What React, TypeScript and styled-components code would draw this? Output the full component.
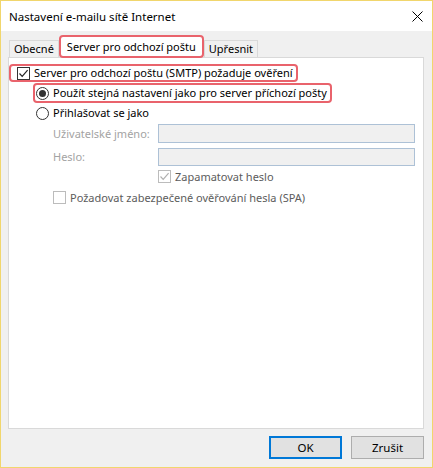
import React from 'react';
import styled, { createGlobalStyle } from 'styled-components';

const GlobalStyle = createGlobalStyle`
  html, body {
    margin: 0;
    padding: 0;
    background: #ffffff;
  }
  body {
    font-family: "Noto Sans", "Open Sans", sans-serif;
    font-size: 11px;
    color: #000;
  }
`;

const Window = styled.div`
  width: 433px;
  height: 468px;
  box-sizing: border-box;
  border: 1px solid #f1d66c;
  background: #f0f0f0;
  display: flex;
  flex-direction: column;
`;

const TitleBar = styled.div`
  height: 30px;
  background: #ffffff;
  display: flex;
  align-items: center;
  justify-content: space-between;
  padding: 0 0 0 8px;
  flex-shrink: 0;
`;

const Title = styled.span`
  font-size: 11.5px;
  line-height: 16px;
  margin-top: 1px;
`;

const CloseButton = styled.div`
  width: 30px;
  height: 30px;
  display: flex;
  align-items: center;
  justify-content: center;
`;

const Body = styled.div`
  flex: 1;
  display: flex;
  flex-direction: column;
  padding: 5px 8px 0 7px;
  min-height: 0;
`;

const TabRow = styled.div`
  display: flex;
  align-items: flex-end;
  height: 21px;
  padding-left: 1px;
  position: relative;
  z-index: 1;
`;

const Tab = styled.div<{ $active?: boolean }>`
  box-sizing: border-box;
  height: ${({ $active }) => ($active ? '23px' : '17px')};
  margin-bottom: ${({ $active }) => ($active ? '-1px' : '0')};
  padding: 0 ${({ $active }) => ($active ? '6px' : '4px')};
  display: flex;
  align-items: center;
  background: ${({ $active }) => ($active ? '#ffffff' : '#f0f0f0')};
  border: ${({ $active }) => ($active ? '2px solid #e9636c' : '1px solid #d9d9d9')};
  border-bottom: ${({ $active }) => ($active ? '2px solid #e9636c' : 'none')};
  border-radius: ${({ $active }) => ($active ? '4px' : '0')};
  line-height: 16px;
  white-space: nowrap;
`;

const Panel = styled.div`
  flex: 1;
  background: #ffffff;
  border: 1px solid #d9d9d9;
  padding: 6px 0 0 0;
  display: flex;
  flex-direction: column;
  align-items: flex-start;
`;

const Highlight = styled.div<{ $indent: number; $top: number; $h: number; $pl: number }>`
  box-sizing: border-box;
  margin-left: ${({ $indent }) => $indent}px;
  margin-top: ${({ $top }) => $top}px;
  height: ${({ $h }) => $h}px;
  border: 2px solid #e9636c;
  border-radius: 4px;
  padding: 0 3px 0 ${({ $pl }) => $pl}px;
  display: flex;
  align-items: center;
  gap: 4px;
`;

const Row = styled.div<{ $indent: number; $top: number; $h: number }>`
  margin-left: ${({ $indent }) => $indent}px;
  margin-top: ${({ $top }) => $top}px;
  height: ${({ $h }) => $h}px;
  display: flex;
  align-items: center;
  gap: 4px;
  align-self: stretch;
`;

const Label = styled.span<{ $tone?: 'normal' | 'muted' | 'faint' }>`
  white-space: nowrap;
  line-height: 16px;
  color: ${({ $tone }) =>
    $tone === 'faint' ? '#a3a3a3' : $tone === 'muted' ? '#5c5c5c' : '#000000'};
`;

const FieldLabel = styled(Label)`
  width: 101px;
  flex-shrink: 0;
`;

const TextInput = styled.div`
  box-sizing: border-box;
  width: 257px;
  height: 100%;
  border: 1px solid #adc1d6;
  background: #f0f0f0;
`;

const Box = styled.span<{ $disabled?: boolean }>`
  box-sizing: border-box;
  width: 13px;
  height: 13px;
  border: 1px solid ${({ $disabled }) => ($disabled ? '#bcbcbc' : '#333333')};
  background: #ffffff;
  display: inline-flex;
  align-items: center;
  justify-content: center;
  flex-shrink: 0;
`;

const Radio = styled.span<{ $checked?: boolean }>`
  box-sizing: border-box;
  width: 13px;
  height: 13px;
  border-radius: 50%;
  border: 1px solid #333333;
  background: #ffffff;
  display: inline-flex;
  align-items: center;
  justify-content: center;
  flex-shrink: 0;

  &::after {
    content: '';
    width: 7px;
    height: 7px;
    border-radius: 50%;
    background: ${({ $checked }) => ($checked ? '#333333' : 'transparent')};
  }
`;

const ButtonRow = styled.div`
  display: flex;
  justify-content: flex-end;
  gap: 9px;
  padding: 7px 0 8px;
`;

const Button = styled.button<{ $default?: boolean }>`
  box-sizing: border-box;
  width: 73px;
  height: 23px;
  font: inherit;
  font-size: 11.5px;
  color: #000;
  background: #e1e1e1;
  border: ${({ $default }) => ($default ? '2px solid #0078d7' : '1px solid #adadad')};
  padding: 0;
`;

function Check({ color }: { color: string }) {
  return (
    <svg width="11" height="11" viewBox="0 0 11 11">
      <path d="M1.5 5.5 L4.2 8.3 L9.6 2.2" fill="none" stroke={color} strokeWidth="1.2" />
    </svg>
  );
}

export default function App() {
  return (
    <>
      <GlobalStyle />
      <Window>
        <TitleBar>
          <Title>Nastavení e-mailu sítě Internet</Title>
          <CloseButton>
            <svg width="11" height="11" viewBox="0 0 11 11">
              <path d="M0.5 0.5 L10.5 10.5 M10.5 0.5 L0.5 10.5" stroke="#000" strokeWidth="1" />
            </svg>
          </CloseButton>
        </TitleBar>
        <Body>
          <TabRow>
            <Tab>Obecné</Tab>
            <Tab $active>Server pro odchozí poštu</Tab>
            <Tab>Upřesnit</Tab>
          </TabRow>
          <Panel>
            <Highlight $indent={0} $top={0} $h={18} $pl={6}>
              <Box>
                <Check color="#222" />
              </Box>
              <Label>Server pro odchozí poštu (SMTP) požaduje ověření</Label>
            </Highlight>
            <Highlight $indent={24} $top={1} $h={20} $pl={1}>
              <Radio $checked />
              <Label>Použít stejná nastavení jako pro server příchozí pošty</Label>
            </Highlight>
            <Row $indent={27} $top={3} $h={14}>
              <Radio />
              <Label>Přihlašovat se jako</Label>
            </Row>
            <Row $indent={44} $top={4} $h={19}>
              <FieldLabel $tone="faint">Uživatelské jméno:</FieldLabel>
              <TextInput />
            </Row>
            <Row $indent={44} $top={5} $h={18}>
              <FieldLabel $tone="faint">Heslo:</FieldLabel>
              <TextInput />
            </Row>
            <Row $indent={149} $top={4} $h={13}>
              <Box $disabled>
                <Check color="#b0b0b0" />
              </Box>
              <Label $tone="muted">Zapamatovat heslo</Label>
            </Row>
            <Row $indent={44} $top={8} $h={13}>
              <Box $disabled />
              <Label $tone="muted">Požadovat zabezpečené ověřování hesla (SPA)</Label>
            </Row>
          </Panel>
          <ButtonRow>
            <Button $default>OK</Button>
            <Button>Zrušit</Button>
          </ButtonRow>
        </Body>
      </Window>
    </>
  );
}
